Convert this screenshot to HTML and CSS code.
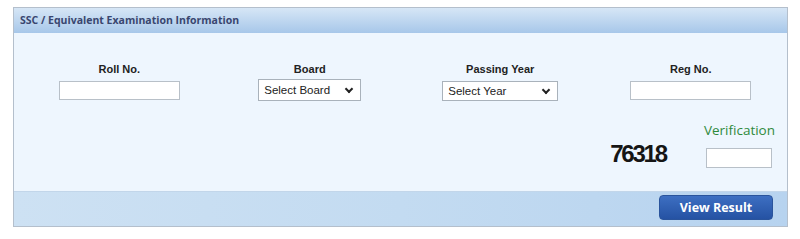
FILE: index.html
```html
<!DOCTYPE html>
<html lang="en">
<head>
  <meta charset="UTF-8">
  <title>SSC / Equivalent Examination Information</title>
  <link rel="stylesheet" href="styles.css">
</head>
<body>

  <!-- exam info panel -->
  <div class="panel">
    <div class="panel-head">SSC / Equivalent Examination Information</div>

    <div class="panel-body">
      <div class="fields">
        <div class="field">
          <label for="roll">Roll No.</label>
          <input type="text" id="roll" class="txt">
        </div>
        <div class="field">
          <label for="board">Board</label>
          <span class="sel sel-board">
            <select id="board"><option>Select Board</option></select>
          </span>
        </div>
        <div class="field">
          <label for="year">Passing Year</label>
          <span class="sel sel-year">
            <select id="year"><option>Select Year</option></select>
          </span>
        </div>
        <div class="field">
          <label for="reg">Reg No.</label>
          <input type="text" id="reg" class="txt">
        </div>
      </div>

      <div class="verify">
        <div class="captcha">76318</div>
        <div class="verify-box">
          <label for="code">Verification</label>
          <input type="text" id="code" class="txt code">
        </div>
      </div>
    </div>

    <div class="panel-foot">
      <button class="btn-view">View Result</button>
    </div>
  </div>

</body>
</html>
```

FILE: styles.css
```css
* { box-sizing: border-box; }
body { margin: 0; background: #fff; font-family: 'Liberation Sans', Arial, sans-serif; }

.panel {
  width: 775px;
  margin: 7px 0 0 13px;
  border: 1px solid #b4bfcc;
}

/* header */
.panel-head {
  height: 25px;
  padding: 5px 0 0 6px;
  background: linear-gradient(#d6e6f6, #a7c7e9);
  font-family: 'Open Sans', sans-serif;
  font-weight: 700;
  font-size: 10.5px;
  color: #39466f;
}

/* body */
.panel-body {
  height: 158px;
  background: #eef6fe;
  padding-top: 30px;
}
.fields {
  display: grid;
  grid-template-columns: repeat(4, 190.5px);
  padding-left: 10px;
}
.field {
  display: flex;
  flex-direction: column;
  align-items: center;
}
.field label {
  font-size: 11px;
  font-weight: bold;
  color: #222;
  height: 17px;
}
.txt {
  width: 121px;
  height: 19px;
  border: 1px solid #b8c0c8;
  background: #fff;
  margin-top: 1px;
}

.sel { position: relative; display: inline-block; }
.sel select {
  appearance: none;
  -webkit-appearance: none;
  height: 22px;
  border: 1px solid #a9b2bb;
  border-radius: 0;
  background: #fff;
  font-family: 'Liberation Sans', Arial, sans-serif;
  font-size: 11.5px;
  color: #222;
  padding: 0 0 0 5px;
}
.sel-board select { width: 103px; margin-top: -1px; }
.sel-year select { width: 116px; height: 20px; margin-top: 1px; }
.sel::after {
  content: '';
  position: absolute;
  right: 9px;
  top: 6px;
  width: 4px;
  height: 4px;
  border-right: 2px solid #222;
  border-bottom: 2px solid #222;
  transform: rotate(45deg);
  pointer-events: none;
}
.sel-year::after { top: 7px; }

/* verification */
.verify {
  display: flex;
  justify-content: flex-end;
  align-items: flex-end;
  padding-right: 12px;
  margin-top: 20px;
}
.captcha {
  font-size: 24px;
  font-weight: bold;
  letter-spacing: -2.2px;
  color: #151515;
  margin-right: 38px;
  margin-bottom: 0;
}
.verify-box {
  display: flex;
  flex-direction: column;
  align-items: center;
}
.verify-box label {
  font-family: 'Open Sans', sans-serif;
  font-size: 13.5px;
  color: #2f8a3c;
  margin-bottom: 8px;
}
.code { width: 66px; height: 20px; }

/* footer */
.panel-foot {
  height: 35px;
  display: flex;
  justify-content: flex-end;
  align-items: flex-start;
  padding: 3px 14px 0 0;
  background: linear-gradient(90deg, #cde1f3, #c3dbf1 50%, #b7d3ef);
  border-top: 1px solid #c2d6ea;
}
.btn-view {
  width: 114px;
  height: 25px;
  border: 1px solid #2a549c;
  border-radius: 4px;
  background: linear-gradient(#3d6fc2, #2552a3);
  color: #fff;
  font-family: 'Open Sans', sans-serif;
  font-weight: 700;
  font-size: 12.5px;
  cursor: pointer;
}
```
